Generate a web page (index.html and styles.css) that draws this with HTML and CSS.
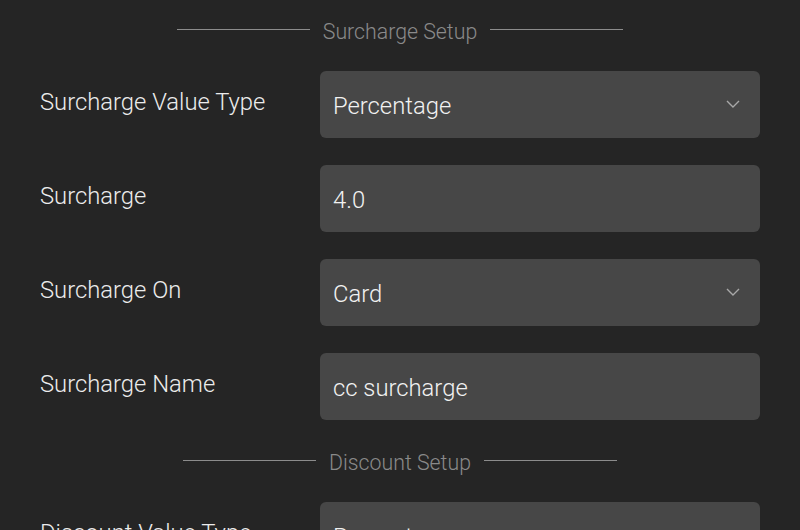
FILE: index.html
```html
<!DOCTYPE html>
<html>
<head>
<meta charset="utf-8">
<link rel="stylesheet" href="styles.css">
</head>
<body>
<div class="page">
  <div class="section-title"><span class="line"></span><span class="title-text">Surcharge Setup</span><span class="line"></span></div>
  <div class="row">
    <div class="label">Surcharge Value Type</div>
    <div class="field select"><span>Percentage</span>
      <svg class="chev" width="14" height="8" viewBox="0 0 14 8"><path d="M1 1 L7 7 L13 1" fill="none" stroke="#a8a8a8" stroke-width="1.4"/></svg>
    </div>
  </div>
  <div class="row">
    <div class="label">Surcharge</div>
    <div class="field"><span>4.0</span></div>
  </div>
  <div class="row">
    <div class="label">Surcharge On</div>
    <div class="field select"><span>Card</span>
      <svg class="chev" width="14" height="8" viewBox="0 0 14 8"><path d="M1 1 L7 7 L13 1" fill="none" stroke="#a8a8a8" stroke-width="1.4"/></svg>
    </div>
  </div>
  <div class="row">
    <div class="label">Surcharge Name</div>
    <div class="field"><span>cc surcharge</span></div>
  </div>
  <div class="section-title"><span class="line"></span><span class="title-text">Discount Setup</span><span class="line"></span></div>
  <div class="row">
    <div class="label">Discount Value Type</div>
    <div class="field select"><span>Percentage</span>
      <svg class="chev" width="14" height="8" viewBox="0 0 14 8"><path d="M1 1 L7 7 L13 1" fill="none" stroke="#a8a8a8" stroke-width="1.4"/></svg>
    </div>
  </div>
</div>
</body>
</html>
```
FILE: styles.css
```css
html, body {
  margin: 0;
  padding: 0;
  background: #252525;
  height: 100%;
  overflow: hidden;
}
body {
  font-family: Roboto, "Liberation Sans", sans-serif;
}
.page {
  padding: 16px 40px 0 40px;
}
.section-title {
  display: flex;
  align-items: center;
  justify-content: center;
  gap: 13px;
  height: 28px;
  margin-bottom: 27px;
}
.section-title .line {
  width: 133px;
  height: 1px;
  background: #8c8c8c;
  margin-top: -2px;
}
.title-text {
  color: #8a8a8a;
  font-size: 21.3px;
  font-weight: 300;
  padding-top: 3px;
}
.row {
  display: flex;
  align-items: flex-start;
  margin-bottom: 27px;
}
.label {
  width: 280px;
  color: #ececec;
  font-size: 23.8px;
  font-weight: 300;
  padding-top: 18px;
  line-height: 26px;
}
.field {
  flex: 1;
  height: 67px;
  background: #474747;
  border-radius: 6px;
  display: flex;
  align-items: center;
  justify-content: space-between;
  padding: 2px 20px 0 13px;
  box-sizing: border-box;
  color: #f2f2f2;
  font-size: 23.8px;
  font-weight: 300;
}
.chev {
  margin-top: -4px;
}
```
